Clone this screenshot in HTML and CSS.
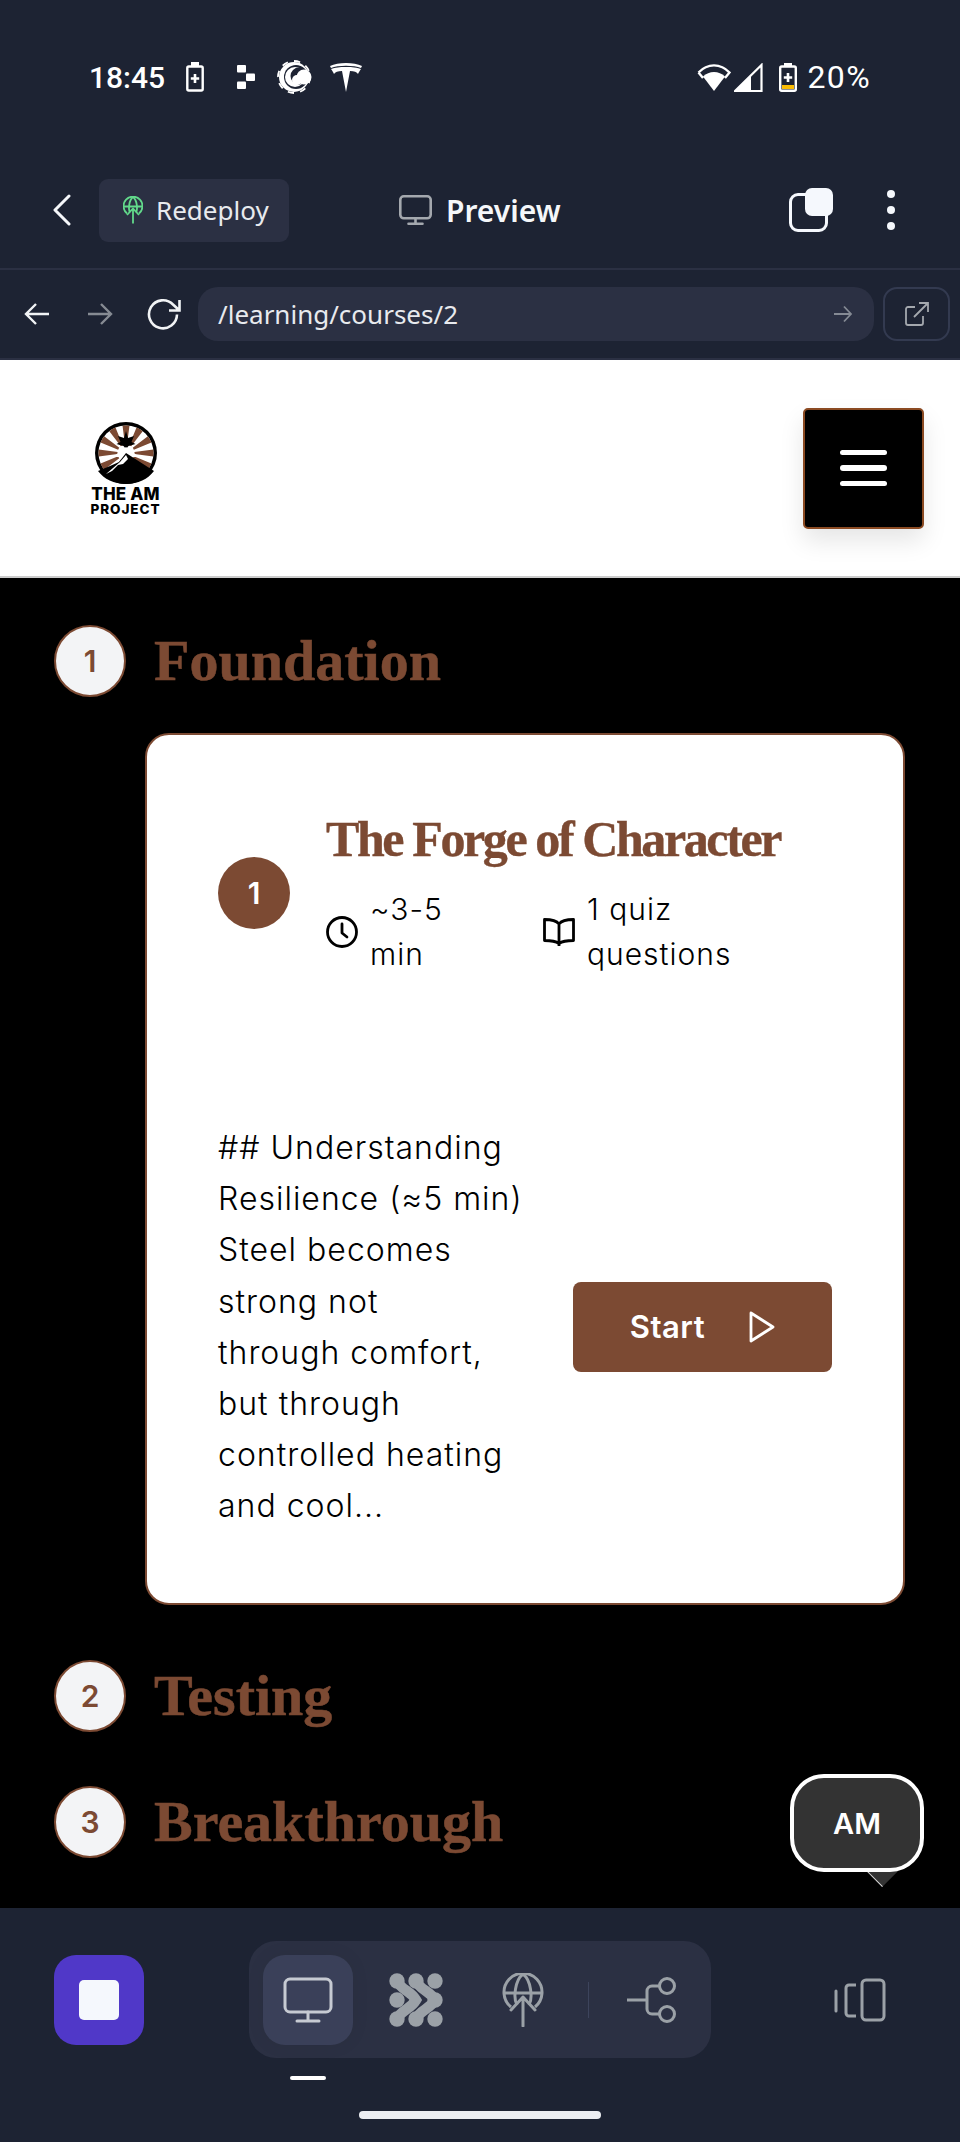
FILE: index.html
```html
<!DOCTYPE html>
<html lang="en">
<head>
<meta charset="utf-8">
<title>The AM Project</title>
<link rel="stylesheet" href="styles.css">
</head>
<body>
<div class="app">
  <div class="status">
    <div class="status-left">
      <span class="time">18:45</span>
      <svg class="ic-batt" width="18" height="30" viewBox="0 0 18 30"><rect x="1.300" y="4.500" width="15.400" height="24" rx="1.500" fill="none" stroke="#fff" stroke-width="2.400"/><rect x="5" y="0" width="8" height="4" fill="#fff"/><path d="M9 12v9M4.800 16.500h8.400" stroke="#fff" stroke-width="2.600"/></svg>
      <svg class="ic-dots" width="18" height="24" viewBox="0 0 18 24"><rect x="0" y="0" width="9" height="7.500" rx="1" fill="#fff"/><rect x="9" y="8.500" width="9" height="7.500" rx="1" fill="#fff"/><rect x="0" y="16.500" width="9" height="7.500" rx="1" fill="#fff"/></svg>
      <svg class="ic-weather" width="36" height="36" viewBox="0 0 36 36"><circle cx="17" cy="18" r="15" fill="#fff"/><circle cx="17" cy="18" r="16" fill="none" stroke="#fff" stroke-width="1.800" pathLength="32" stroke-dasharray="2 2"/><circle cx="19" cy="18" r="12" fill="#1d2333"/><circle cx="18" cy="18" r="10" fill="#fff"/><circle cx="22" cy="17" r="8.500" fill="#1d2333"/><circle cx="27" cy="18" r="7.500" fill="#fff"/><circle cx="20" cy="21" r="5" fill="#fff"/></svg>
      <svg class="ic-tesla" width="32" height="30" viewBox="0 0 32 30"><path d="M0 4C8 0 24 0 32 4l-1 2C24 3 8 3 1 6z" fill="#fff"/><path d="M16 30l4-21c4 0 7 1 8 3 1-2 2-4 3-5-7-2-11-2-15-2s-8 0-15 2c1 1 2 3 3 5 1-2 4-3 8-3z" fill="#fff"/></svg>
    </div>
    <div class="status-right">
      <svg width="34" height="28" viewBox="0 0 34 28"><path d="M17 28L6 13.500c6-6 16-6 22 0z" fill="#fff"/><path d="M1.500 9.500c9-9.500 22-9.500 31 0L28 15" fill="none" stroke="#fff" stroke-width="2.400"/><path d="M1.500 9.500L6 15" stroke="#fff" stroke-width="2.400"/></svg>
      <svg class="ic-signal" width="29" height="29" viewBox="0 0 29 29"><path d="M1 28L27.500 2v26z" fill="none" stroke="#fff" stroke-width="2.200"/><path d="M1 28L17 12v16z" fill="#fff"/></svg>
      <svg class="ic-charge" width="18" height="29" viewBox="0 0 18 29"><rect x="5" y="0" width="8" height="4" fill="#fff"/><rect x="1.200" y="3.500" width="15.600" height="24.300" rx="1.500" fill="none" stroke="#fff" stroke-width="2.400"/><rect x="3" y="22" width="12" height="4" fill="#fbbc04"/><path d="M9 10v9M4.800 14.500h8.400" stroke="#fff" stroke-width="2.600"/></svg>
      <span class="pct">20%</span>
    </div>
  </div>

  <div class="toolbar">
    <svg class="back" width="20" height="32" viewBox="0 0 20 32"><path d="M17 2L3 16l14 14" fill="none" stroke="#f5f7fa" stroke-width="3" stroke-linecap="round" stroke-linejoin="round"/></svg>
    <button class="redeploy">
      <svg width="20" height="28" viewBox="0 0 40 54" fill="none" stroke="#62d98b" stroke-width="3.600"><path d="M8 34A19 19 0 1 1 32 34"/><path d="M2 20h36M20 1c-8 6-10 24-6 31M20 1c8 6 10 24 6 31"/><path d="M20 54V24M8 37l12-13 12 13" stroke-linejoin="round"/></svg>
      <span>Redeploy</span>
    </button>
    <div class="title">
      <svg width="33" height="30" viewBox="0 0 33 30" fill="none" stroke="#a4a8ae" stroke-width="2.600"><rect x="1.300" y="1.300" width="30.400" height="22" rx="3.500"/><path d="M16.500 23.500v5M9.500 28.700h14" stroke-linecap="round"/></svg>
      <span>Preview</span>
    </div>
    <div class="tool-right">
      <div class="copy"><span class="copy-back"></span><span class="copy-front"></span></div>
      <div class="kebab"><span></span><span></span><span></span></div>
    </div>
  </div>

  <div class="urlbar">
    <svg class="nav-a" width="26" height="24" viewBox="0 0 26 24" fill="none" stroke="#f1f3f5" stroke-width="2.400"><path d="M25 12H2M12 2L2 12l10 10"/></svg>
    <svg class="nav-b" width="26" height="24" viewBox="0 0 26 24" fill="none" stroke="#868b93" stroke-width="2.400"><path d="M1 12h23M14 2l10 10-10 10"/></svg>
    <svg class="nav-c" width="34" height="32" viewBox="0 0 34 32" fill="none" stroke="#f1f3f5" stroke-width="2.600"><path d="M30 16.500A14 14 0 1 1 26 6.500l6 5.500M32.500 2v10.500H22"/></svg>
    <div class="url">
      <span>/learning/courses/2</span>
      <svg width="20" height="18" viewBox="0 0 20 18" fill="none" stroke="#858a94" stroke-width="1.800"><path d="M1 9h17M11 1.500L18 9l-7 7.500"/></svg>
    </div>
    <div class="ext">
      <svg width="24" height="24" viewBox="0 0 24 24" fill="none" stroke="#a4a8ae" stroke-width="1.800"><path d="M10 5H3a2 2 0 0 0-2 2v14a2 2 0 0 0 2 2h13a2 2 0 0 0 2-2v-7M9 15L23 1M14 1h9v9"/></svg>
    </div>
  </div>

  <header class="site-head">
    <div class="logo">
      <svg width="62" height="62" viewBox="0 0 62 62">
        <circle cx="31" cy="31" r="31" fill="#000"/>
        <circle cx="31" cy="31" r="27.500" fill="#fff"/>
        <circle cx="31" cy="31" r="18" fill="none" stroke="#7c4a33" stroke-width="19" pathLength="48" stroke-dasharray="2 2" stroke-dashoffset="1"/>
        <path d="M31 9l2 7 6-2-2.500 6 4 2-7 2-2.500 3-2.500-3-7-2 4-2-2.500-6 6 2z" fill="#000"/>
        <path d="M31 25L44 35 38 35 31 30 24 35 18 35z" fill="#fff"/>
        <path d="M31 31L59 49C53 57 43 62 31 62S9 57 3 49L15 44 24 40z" fill="#000"/>
        <path d="M11 52L25 40 31 33 33 37 28 42 23 43 17 49z" fill="#fff"/>
      </svg>
      <span class="logo-a">THE AM</span>
      <span class="logo-b">PROJECT</span>
    </div>
    <button class="burger"><span></span><span></span><span></span></button>
  </header>

  <main class="main">
    <section class="sec-head">
      <span class="sec-num">1</span>
      <h2>Foundation</h2>
    </section>
    <article class="card">
      <div class="card-top">
        <span class="card-num">1</span>
        <div class="card-info">
          <h3>The Forge of Character</h3>
          <div class="meta">
            <div class="meta-item">
              <svg width="32" height="32" viewBox="0 0 32 32" fill="none" stroke="#000" stroke-width="2.800"><circle cx="16" cy="16" r="14.500"/><path d="M16 8v9l5 4" stroke-linecap="round" stroke-linejoin="round"/></svg>
              <span>~3-5<br>min</span>
            </div>
            <div class="meta-item">
              <svg width="32" height="32" viewBox="0 0 32 32" fill="none" stroke="#000" stroke-width="2.800" stroke-linejoin="round"><path d="M16 8C13 4 8 3.500 1.500 3.500v21c6 0 11 .5 14.500 3 3.500-2.500 8.500-3 14.500-3v-21C24 3.500 19 4 16 8zv22"/></svg>
              <span>1 quiz<br>questions</span>
            </div>
          </div>
        </div>
      </div>
      <div class="card-body">
        <p>## Understanding<br>Resilience (≈5 min)<br>Steel becomes<br>strong not<br>through comfort,<br>but through<br>controlled heating<br>and cool...</p>
        <button class="start">
          <span>Start</span>
          <svg width="26" height="32" viewBox="0 0 26 32" fill="none" stroke="#fff" stroke-width="2.800" stroke-linejoin="round"><path d="M2 2l22 14L2 30z"/></svg>
        </button>
      </div>
    </article>
    <section class="sec-head sec-2">
      <span class="sec-num">2</span>
      <h2>Testing</h2>
    </section>
    <section class="sec-head sec-3">
      <span class="sec-num">3</span>
      <h2>Breakthrough</h2>
    </section>
    <div class="bubble"><span>AM</span></div>
  </main>

  <footer class="dock">
    <div class="dock-row">
      <button class="stop"><span></span></button>
      <div class="tabs">
        <div class="tab tab-on">
          <svg width="50" height="46" viewBox="0 0 50 46" fill="none" stroke="#c6cad2" stroke-width="3"><rect x="2" y="2" width="46" height="33" rx="5"/><path d="M25 35v8M14 44h22" stroke-linecap="round"/></svg>
        </div>
        <div class="tab">
          <svg width="56" height="56" viewBox="0 0 56 56" fill="#9ba1a7"><circle cx="9" cy="9" r="7.700"/><circle cx="28" cy="9" r="7.700"/><circle cx="47" cy="9" r="7.700"/><circle cx="9" cy="28" r="7.700"/><circle cx="47" cy="28" r="7.700"/><circle cx="9" cy="47" r="7.700"/><circle cx="28" cy="47" r="7.700"/><circle cx="47" cy="47" r="7.700"/><path d="M9 9c5 10 13 9 19 19-6 10-14 9-19 19M28 9c5 10 13 9 19 19-6 10-14 9-19 19" fill="none" stroke="#9ba1a7" stroke-width="10.500"/></svg>
        </div>
        <div class="tab tab-globe">
          <svg width="42" height="54" viewBox="0 0 40 54" fill="none" stroke="#9ba1a7" stroke-width="3"><path d="M8 34A19 19 0 1 1 32 34"/><path d="M2 20h36M20 1c-8 6-10 24-6 31M20 1c8 6 10 24 6 31"/><path d="M20 53V24M8 37l12-13 12 13" stroke-linecap="round" stroke-linejoin="round"/></svg>
        </div>
        <span class="tab-sep"></span>
        <div class="tab">
          <svg width="50" height="46" viewBox="0 0 50 46" fill="none" stroke="#9ba1a7" stroke-width="3"><circle cx="40" cy="9" r="7.500"/><circle cx="40" cy="37" r="7.500"/><path d="M32 9h-7a5 5 0 0 0-5 5v18a5 5 0 0 0 5 5h7M0 23h20"/></svg>
        </div>
      </div>
      <svg class="device" width="52" height="44" viewBox="0 0 52 44" fill="none" stroke="#9ba1a7" stroke-width="3"><path d="M2 13v20" stroke-linecap="round"/><path d="M22 7h-7a3 3 0 0 0-3 3v25a3 3 0 0 0 3 3h7"/><rect x="28" y="2" width="22" height="40" rx="4"/></svg>
    </div>
    <span class="tab-mark"></span>
    <span class="home-pill"></span>
  </footer>
</div>
</body>
</html>
```

FILE: styles.css
```css
* { box-sizing: border-box; }
html, body { margin: 0; padding: 0; }
body { background: #000; font-family: "Inter", "Liberation Sans", sans-serif; }
button { border: 0; padding: 0; font: inherit; }
h2, h3, p { margin: 0; }
svg { display: block; flex: none; }

.app { width: 960px; height: 2142px; display: flex; flex-direction: column; overflow: hidden; }

/* status bar */
.status { height: 136px; padding: 18px 89px 0; background: #1d2333; display: flex; justify-content: space-between; align-items: center; color: #fff; font-family: "Roboto", sans-serif; font-size: 30px; }
.status-left, .status-right { display: flex; align-items: center; }
.time { font-weight: 500; width: 74px; }
.ic-batt { margin-left: 23px; }
.ic-dots { margin-left: 33px; }
.ic-weather { margin-left: 22px; }
.ic-tesla { margin-left: 17px; }
.ic-signal { margin-left: 3px; }
.ic-charge { margin-left: 16px; }
.pct { margin-left: 10px; font-size: 32px; letter-spacing: 1.400px; }

/* toolbar */
.toolbar { height: 134px; padding: 16px 0 0 52px; background: #1d2333; border-bottom: 2px solid #2b3043; display: flex; align-items: center; color: #fff; font-family: "Noto Sans", sans-serif; }
.redeploy { margin-left: 27px; width: 190px; height: 63px; border-radius: 9px; background: #2b3043; color: #e8eaee; display: flex; align-items: center; gap: 13px; padding-left: 24px; font-size: 26px; }
.title { margin-left: 110px; display: flex; align-items: center; gap: 14px; font-size: 30px; font-weight: 600; color: #f5f7fa; }
.tool-right { margin-left: auto; margin-right: 65px; display: flex; align-items: center; gap: 54px; }
.copy { width: 44px; height: 44px; position: relative; }
.copy-back { position: absolute; left: 0; bottom: 0; width: 39px; height: 39px; border: 3px solid #f5f8fd; border-radius: 9px; }
.copy-front { position: absolute; right: 0; top: 0; width: 28px; height: 28px; background: #f5f8fd; border-radius: 7px; }
.kebab { display: flex; flex-direction: column; gap: 8px; }
.kebab span { width: 8px; height: 8px; border-radius: 50%; background: #f5f8fd; }

/* url bar */
.urlbar { height: 90px; padding: 0 10px 0 24px; background: #1d2333; border-bottom: 2px solid #2b3043; display: flex; align-items: center; font-family: "Noto Sans", sans-serif; }
.nav-b { margin-left: 37px; }
.nav-c { margin-left: 34px; }
.url { margin-left: 17px; width: 676px; height: 54px; flex: none; border-radius: 20px; background: #2b3043; color: #e8eaee; font-size: 26px; display: flex; align-items: center; justify-content: space-between; padding: 0 21px 0 20px; }
.ext { margin-left: 9px; width: 67px; height: 54px; flex: none; border: 2px solid #333a50; border-radius: 14px; display: flex; align-items: center; justify-content: center; }

/* site header */
.site-head { height: 218px; padding: 0 36px 0 92px; background: #fff; border-bottom: 2px solid #ccc; display: flex; align-items: center; justify-content: space-between; }
.logo { width: 67px; display: flex; flex-direction: column; align-items: center; color: #000; font-weight: 800; white-space: nowrap; }
.logo-a { margin-top: 2px; font-size: 17px; line-height: 17px; letter-spacing: .2px; }
.logo-b { font-size: 13.500px; line-height: 12px; letter-spacing: .9px; }
.burger { width: 121px; height: 121px; background: #000; border: 2px solid #8b4a22; border-radius: 5px; display: flex; flex-direction: column; align-items: center; justify-content: center; gap: 10.400px; box-shadow: 0 12px 24px rgba(0, 0, 0, .1); }
.burger span { width: 47px; height: 5.300px; border-radius: 3px; background: #fff; }

/* main */
.main { flex: 1; position: relative; z-index: 0; background: #000; padding: 47px 55px 0 54px; }
.sec-head { display: flex; align-items: center; gap: 28px; }
.sec-num { width: 72px; height: 72px; border-radius: 50%; background: #f3f4f6; border: 2px solid #7c4a33; color: #7c4a33; font-size: 30px; font-weight: 600; display: flex; align-items: center; justify-content: center; }
.sec-head h2 { font-family: "Liberation Serif", serif; font-size: 58px; font-weight: 700; line-height: 72px; color: #7c4a33; -webkit-text-stroke: .5px #7c4a33; }
.sec-2 { margin-top: 55px; }
.sec-3 { margin-top: 54px; }

.card { margin: 36px 0 0 91px; background: #fff; border: 2px solid #7c4a33; border-radius: 24px; padding: 71px; }
.card-top { display: flex; align-items: center; gap: 36px; }
.card-num { width: 72px; height: 72px; flex: none; border-radius: 50%; background: #7c4a33; color: #fff; font-size: 30px; font-weight: 600; display: flex; align-items: center; justify-content: center; }
.card-info { flex: 1; padding-bottom: 3px; }
.card-info h3 { font-family: "Liberation Serif", serif; font-size: 50px; font-weight: 700; line-height: 66px; letter-spacing: -2.400px; color: #7c4a33; white-space: nowrap; -webkit-text-stroke: .4px #7c4a33; }
.meta { margin-top: 15px; display: grid; grid-template-columns: 217px 1fr; font-size: 30px; font-weight: 300; line-height: 45px; color: #000; }
.meta-item { display: flex; align-items: center; gap: 12px; }
.meta-item span { letter-spacing: 1px; }

.card-body { margin-top: 142px; display: flex; align-items: center; justify-content: space-between; }
.card-body p { font-size: 32px; font-weight: 300; line-height: 51.200px; color: #000; letter-spacing: 1px; }
.start { width: 259px; height: 90px; border-radius: 8px; background: #7c4a33; color: #fff; font-size: 31px; font-weight: 600; letter-spacing: .5px; display: flex; align-items: center; justify-content: center; gap: 44px; }

/* floating AM bubble */
.bubble { position: absolute; left: 790px; top: 1196px; width: 134px; height: 98px; border: 4px solid #fff; border-radius: 34px; background: #333; color: #fff; font-size: 29px; font-weight: 600; display: flex; align-items: center; justify-content: center; }
.bubble::after { content: ""; position: absolute; left: 77px; bottom: -14px; width: 22px; height: 22px; background: #333; border-left: 1px solid #ddd; transform: rotate(-45deg); z-index: -1; }
.bubble span { position: relative; }

/* dock */
.dock { height: 234px; background: #1d2333; position: relative; padding: 33px 74px 0 54px; }
.dock-row { display: flex; align-items: center; height: 117px; }
.stop { width: 90px; height: 90px; border-radius: 22px; background: #5038c8; display: flex; align-items: center; justify-content: center; }
.stop span { width: 40px; height: 40px; border-radius: 5px; background: #f5f8fd; }
.tabs { margin-left: 105px; width: 462px; height: 117px; border-radius: 27px; background: #2b3043; display: flex; align-items: center; padding-left: 14px; }
.tab { width: 90px; height: 90px; flex: none; border-radius: 22px; display: flex; align-items: center; justify-content: center; }
.tab-on { background: #3a4059; margin-right: 18px; box-shadow: 0 0 20px rgba(0, 0, 0, .05); }
.tab-globe { margin-left: 17px; }
.tab-sep { width: 1px; height: 36px; margin: 0 18px 0 20px; background: #3d445c; }
.device { margin-left: auto; }
.tab-mark { position: absolute; left: 290px; top: 168px; width: 36px; height: 4px; border-radius: 2px; background: #fff; }
.home-pill { position: absolute; left: 359px; top: 203px; width: 242px; height: 8px; border-radius: 4px; background: #eceef2; }
```
